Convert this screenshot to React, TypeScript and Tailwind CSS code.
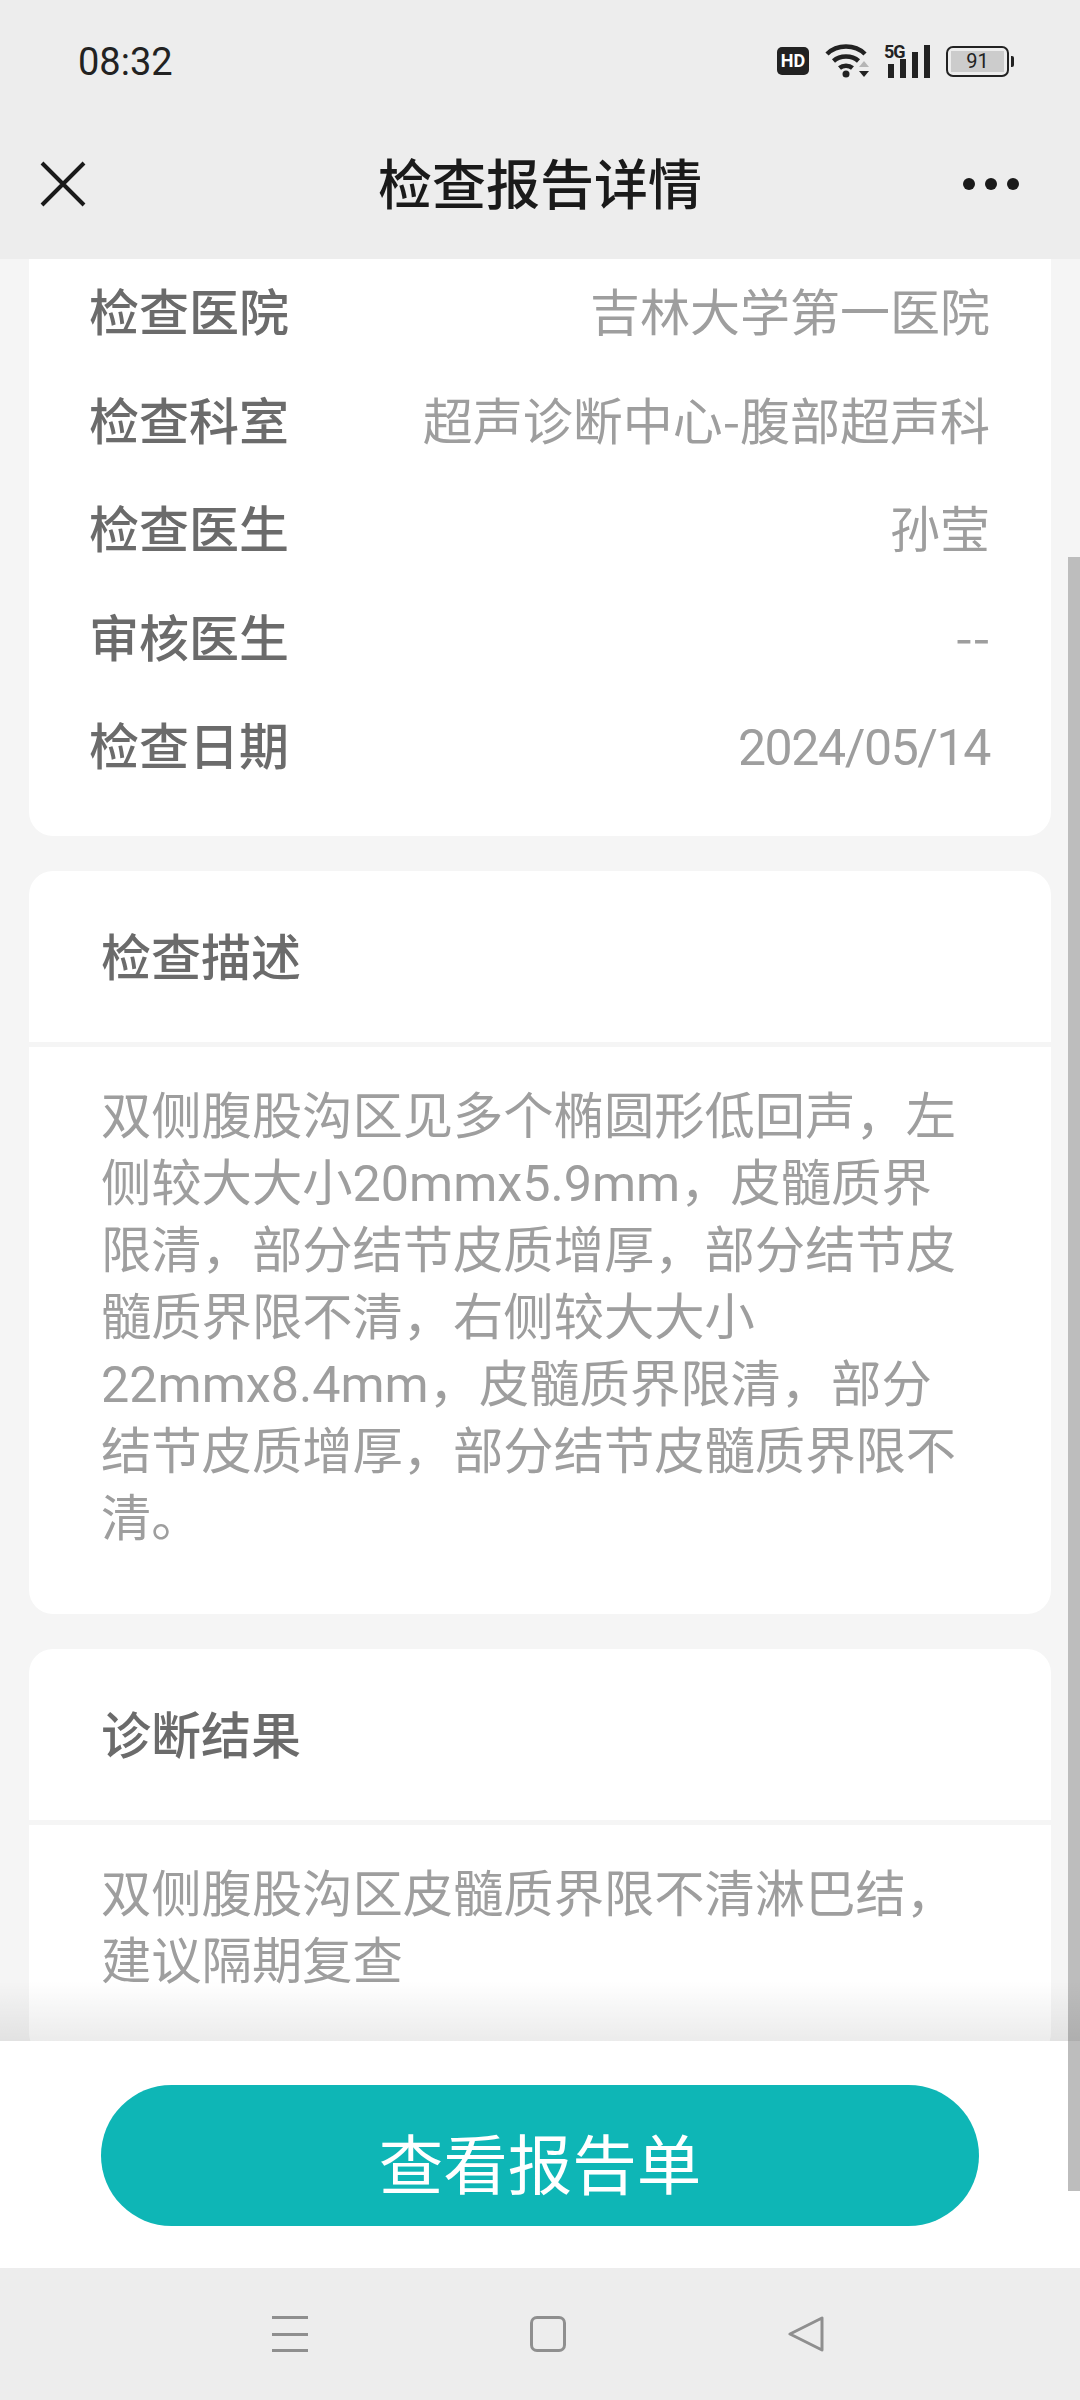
import React from "react";

const rows = [
  { label: "检查医院", value: "吉林大学第一医院", valueClass: "" },
  { label: "检查科室", value: "超声诊断中心-腹部超声科", valueClass: "pb-[9px] font-['Noto_Sans_CJK_SC',sans-serif]" },
  { label: "检查医生", value: "孙莹", valueClass: "" },
  { label: "审核医生", value: "--", valueClass: "pb-[12px] font-['Noto_Sans_CJK_SC',sans-serif]" },
  { label: "检查日期", value: "2024/05/14", valueClass: "tracking-[-1.4px]" },
];

const fontStack = "font-['Roboto','Noto_Sans_CJK_SC',sans-serif]";

const StatusIcons = () => (
  <div className="flex items-center">
    <div className="flex h-[28px] w-[32px] items-center justify-center rounded-[5px] bg-[#222222] text-[18px] font-bold leading-none text-white">
      HD
    </div>
    {/* wifi */}
    <svg className="ml-[16px]" width="44" height="36" viewBox="0 0 44 36" fill="none">
      <path d="M2 11C12 1 30 1 40 11" stroke="#222" strokeWidth="4.5" />
      <path d="M8.5 18C15 12 27 12 33.5 18" stroke="#222" strokeWidth="4.5" />
      <path d="M14.5 25C18 22 24 22 27.5 25" stroke="#222" strokeWidth="4.5" />
      <circle cx="21" cy="31" r="3.5" fill="#222" />
      <path d="M34 24H44L39 18Z" fill="#b5b5b5" />
      <path d="M34 28H44L39 34Z" fill="#222" />
    </svg>
    <div className="relative ml-[15px] h-[34px] w-[48px]">
      <span className="absolute left-0 top-[-2px] text-[18px] font-bold leading-[20px] tracking-[-1px] text-[#222222]">
        5G
      </span>
      <svg className="absolute left-0 top-0" width="48" height="34" viewBox="0 0 48 34">
        <rect x="4" y="20" width="6" height="14" fill="#222" />
        <rect x="16" y="15" width="6" height="19" fill="#222" />
        <rect x="28" y="8" width="6" height="26" fill="#222" />
        <rect x="40" y="1" width="6" height="33" fill="#222" />
      </svg>
    </div>
    {/* battery */}
    <div className="ml-[14px] flex items-center">
      <div className="flex h-[31px] w-[63px] items-center justify-center rounded-[7px] border-[2.5px] border-[#222222] p-[3px]">
        <div className="flex h-full w-full items-center justify-center bg-[#cccccc] text-[20px] leading-none text-[#222222]">
          91
        </div>
      </div>
      <div className="ml-[2px] h-[11px] w-[3px] rounded-r-[2px] bg-[#222222]" />
    </div>
  </div>
);

const Section = ({ title, children }: { title: string; children: React.ReactNode }) => (
  <div className="rounded-[24px] bg-white">
    <div className="box-content flex h-[171px] items-center border-b-[5px] border-[#f5f5f5] px-[72px] text-[50px] font-medium leading-none text-[#6b6b6b]">
      <span className="pt-[6px]">{title}</span>
    </div>
    <div className="pb-[62px] pl-[72px] pr-[90px] pt-[36px] text-[50.3px] leading-[67px] text-[#9e9e9e]">
      {children}
    </div>
  </div>
);

export default function App() {
  return (
    <div className={`flex h-[2400px] w-[1080px] flex-col overflow-hidden bg-[#f5f5f5] ${fontStack}`}>
      {/* status bar + title bar */}
      <div className="h-[259px] shrink-0 bg-[#ededed]">
        <div className="flex h-[122px] items-center justify-between pl-[78px] pr-[66px] text-[#222222]">
          <span className="pt-[2px] text-[38px] leading-none">08:32</span>
          <StatusIcons />
        </div>
        <div className="grid h-[124px] grid-cols-[1fr_auto_1fr] items-center px-[40px]">
          <svg width="46" height="46" viewBox="0 0 46 46" fill="none">
            <path d="M2 2L44 44M44 2L2 44" stroke="#1a1a1a" strokeWidth="4" />
          </svg>
          <span className="pt-[6px] text-[54px] font-medium leading-none text-[#1a1a1a]">检查报告详情</span>
          <div className="mr-[21px] flex w-[56px] justify-between justify-self-end">
            <div className="h-[12px] w-[12px] rounded-full bg-[#1a1a1a]" />
            <div className="h-[12px] w-[12px] rounded-full bg-[#1a1a1a]" />
            <div className="h-[12px] w-[12px] rounded-full bg-[#1a1a1a]" />
          </div>
        </div>
      </div>

      {/* scrolling content */}
      <div className="relative min-h-0 flex-1 overflow-hidden">
        <div className="flex flex-col gap-[35px] px-[29px]">
          <div className="rounded-b-[24px] bg-white pb-[33px] pt-[1px]">
            {rows.map((row) => (
              <div
                key={row.label}
                className="flex h-[108.5px] items-center justify-between pl-[60px] pr-[61px] text-[50px] leading-none"
              >
                <span className="font-medium text-[#6b6b6b]">{row.label}</span>
                <span className={`text-[#9e9e9e] ${row.valueClass}`}>{row.value}</span>
              </div>
            ))}
          </div>
          <Section title="检查描述">
            双侧腹股沟区见多个椭圆形低回声，左侧较大大小20mmx5.9mm，皮髓质界限清，部分结节皮质增厚，部分结节皮髓质界限不清，右侧较大大小22mmx8.4mm，皮髓质界限清，部分结节皮质增厚，部分结节皮髓质界限不清。
          </Section>
          <Section title="诊断结果">
            双侧腹股沟区皮髓质界限不清淋巴结，建议隔期复查
          </Section>
        </div>
        {/* scrollbar */}
        <div className="absolute right-0 top-[298px] h-[1633px] w-[12px] bg-[#bdbdbd]" />
        {/* fade above bottom bar */}
        <div className="absolute bottom-0 left-0 right-0 h-[60px] bg-gradient-to-b from-transparent to-[#00000014]" />
      </div>

      {/* bottom action */}
      <div className="relative flex h-[227px] shrink-0 items-start justify-center bg-white pt-[44px]">
        <div className="flex h-[141px] w-[878px] items-center justify-center rounded-full bg-[#0eb6b6] text-[64.5px] leading-none text-white">
          <span className="pt-[24px]">查看报告单</span>
        </div>
        <div className="absolute right-0 top-0 h-[150px] w-[12px] bg-[#bdbdbd]" />
      </div>

      {/* system nav */}
      <div className="flex h-[132px] shrink-0 items-start bg-[#ededed] pl-[272px] pt-[48px]">
        <div className="flex h-[36px] w-[36px] flex-col justify-between">
          <div className="h-[3px] bg-[#8f8f8f]" />
          <div className="h-[3px] bg-[#8f8f8f]" />
          <div className="h-[3px] bg-[#8f8f8f]" />
        </div>
        <div className="ml-[222px] h-[36px] w-[36px] rounded-[7px] border-[3px] border-[#8f8f8f]" />
        <svg className="ml-[222px]" width="36" height="36" viewBox="0 0 36 36" fill="none">
          <path d="M34 2V34L2 18Z" stroke="#8f8f8f" strokeWidth="3" strokeLinejoin="round" />
        </svg>
      </div>
    </div>
  );
}
